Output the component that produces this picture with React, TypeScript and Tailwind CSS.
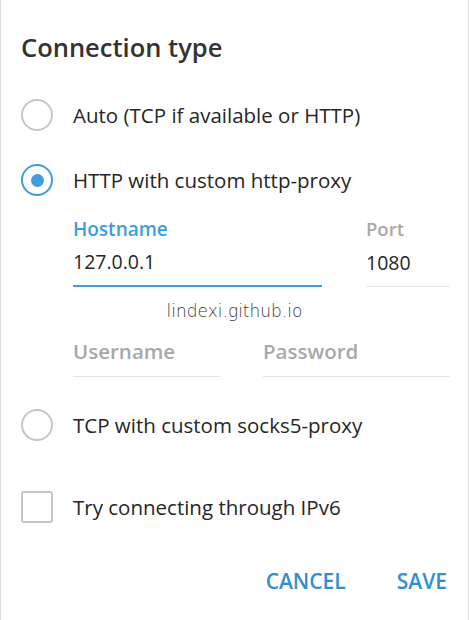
export default function App() {
  const Radio = ({ checked }: { checked?: boolean }) => (
    <div
      className={`w-[32px] h-[32px] rounded-full border-2 flex items-center justify-center shrink-0 ${
        checked ? "border-[#3d9ddd]" : "border-[#c6c6c6]"
      }`}
    >
      {checked && <div className="w-[13px] h-[13px] rounded-full bg-[#3d9ddd]" />}
    </div>
  );
  return (
    <div className="w-[469px] h-[620px] bg-white border-x border-[#dcdcdc] font-['Open_Sans',sans-serif] text-[#262626] overflow-hidden">
      <div className="h-[95px] flex items-center pl-[20px]">
        <h1 className="text-[25.5px] font-semibold text-[#333333] leading-none">Connection type</h1>
      </div>
      <div className="h-[40px] flex items-center pl-[20px] gap-[20px]">
        <Radio />
        <span className="text-[20.5px]">Auto (TCP if available or HTTP)</span>
      </div>
      <div className="h-[40px] mt-[25px] flex items-center pl-[20px] gap-[20px]">
        <Radio checked />
        <span className="text-[20.5px]">HTTP with custom http-proxy</span>
      </div>
      <div className="mt-[19px] pl-[72px] flex gap-[44px]">
        <div className="w-[249px]">
          <div className="h-[20px] leading-[20px] text-[19px] font-semibold text-[#3d9ddd]">Hostname</div>
          <div className="h-[48px] border-b-2 border-[#3d9ddd] flex items-center text-[19.5px]">127.0.0.1</div>
        </div>
        <div className="w-[84px]">
          <div className="h-[20px] leading-[20px] text-[18.5px] font-semibold text-[#a8a8a8]">Port</div>
          <div className="h-[48px] border-b border-[#e4e4e4] flex items-center text-[19.5px]">1080</div>
        </div>
      </div>
      <div className="mt-[14px] h-[20px] leading-[20px] text-center text-[17px] text-[#3a3a3a] font-['DejaVu_Sans',sans-serif] font-extralight">
        lindexi.github.io
      </div>
      <div className="mt-[6px] pl-[72px] flex gap-[43px]">
        <div className="w-[147px] h-[50px] border-b border-[#e4e4e4] flex items-center text-[20.5px] font-semibold text-[#a8a8a8]">Username</div>
        <div className="w-[187px] h-[50px] border-b border-[#e4e4e4] flex items-center text-[20.5px] font-semibold text-[#a8a8a8]">Password</div>
      </div>
      <div className="h-[40px] mt-[28px] flex items-center pl-[20px] gap-[20px]">
        <Radio />
        <span className="text-[20.5px]">TCP with custom socks5-proxy</span>
      </div>
      <div className="h-[40px] mt-[42px] flex items-center pl-[20px] gap-[20px]">
        <div className="w-[32px] h-[32px] rounded-[3px] border-2 border-[#c6c6c6] shrink-0" />
        <span className="text-[20.5px]">Try connecting through IPv6</span>
      </div>
      <div className="h-[40px] mt-[35px] flex items-center justify-end pr-[21px] gap-[51px] text-[21px] font-semibold text-[#2f8fd2]">
        <span>CANCEL</span>
        <span>SAVE</span>
      </div>
    </div>
  );
}
